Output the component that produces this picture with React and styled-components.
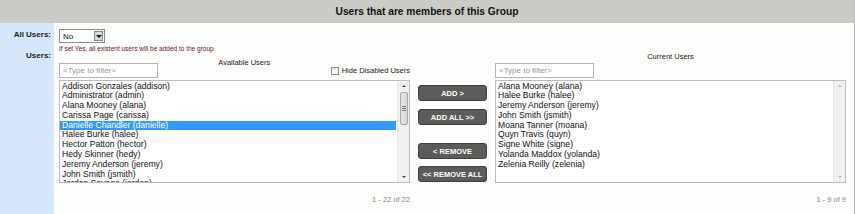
import React from 'react';
import styled, { createGlobalStyle } from 'styled-components';

const GlobalStyle = createGlobalStyle`
  body {
    margin: 0;
    background: #ffffff;
    font-family: "Liberation Sans", Arial, sans-serif;
  }
`;

const Page = styled.div`
  width: 854px;
  height: 214px;
  border-right: 1px solid #b8b8b6;
  background: #fdfdfb;
  display: flex;
  flex-direction: column;
  overflow: hidden;
`;

const Header = styled.div`
  height: 23px;
  flex: none;
  background: #cbcbc8;
  display: flex;
  align-items: center;
  justify-content: center;
  font-size: 10.2px;
  font-weight: bold;
  color: #111;
`;

const Body = styled.div`
  flex: 1;
  display: grid;
  grid-template-columns: 54px 1fr;
`;

const LabelColumn = styled.div`
  background: #d6e6fb;
  display: flex;
  flex-direction: column;
  align-items: flex-end;
  padding: 7px 3px 0 0;
`;

const Label = styled.div`
  font-size: 8px;
  font-weight: bold;
  color: #222;
  line-height: 10px;
  margin-bottom: ${(p) => p.gap || 0}px;
`;

const Content = styled.div`
  padding: 6px 0 0 5px;
  display: flex;
  flex-direction: column;
`;

const Select = styled.div`
  width: 41px;
  height: 12px;
  border: 1px solid #8d8d8d;
  background: #fff;
  display: flex;
  align-items: center;
  font-size: 8px;
  color: #111;
  padding-left: 3px;
  span {
    flex: 1;
  }
`;

const SelectArrow = styled.div`
  width: 9px;
  height: 10px;
  margin-right: 1px;
  background: #d9d9d9;
  border: 1px solid #8a8a8a;
  box-sizing: border-box;
  display: flex;
  align-items: center;
  justify-content: center;
  &::after {
    content: '';
    border-left: 3px solid transparent;
    border-right: 3px solid transparent;
    border-top: 3px solid #111;
  }
`;

const Hint = styled.div`
  font-size: 6.5px;
  color: #6a1033;
  line-height: 9px;
  margin-top: 1px;
`;

const Lists = styled.div`
  display: grid;
  grid-template-columns: 351px 85px 351px;
  margin-top: -1px;
`;

const Panel = styled.div`
  display: flex;
  flex-direction: column;
`;

const Toolbar = styled.div`
  height: ${(p) => p.height || 26}px;
  display: flex;
  align-items: flex-end;
`;

const Title = styled.div`
  font-size: 7.5px;
  color: #222;
  line-height: 10px;
  text-align: center;
`;

const ToolbarTitle = styled(Title)`
  flex: 1;
  align-self: flex-start;
  margin-top: 6px;
`;

const Filter = styled.div`
  width: 94px;
  height: 13px;
  border: 1px solid #b4b4b4;
  background: #fff;
  font-size: 8px;
  line-height: 13px;
  color: #999;
  padding-left: 3px;
  box-sizing: content-box;
`;

const CheckRow = styled.label`
  display: flex;
  align-items: center;
  gap: 3px;
  font-size: 7.5px;
  color: #222;
  margin-bottom: 3px;
`;

const Box = styled.span`
  width: 8px;
  height: 8px;
  box-sizing: border-box;
  border: 1px solid #8f8f8f;
  background: linear-gradient(#e9e9e9, #fdfdfd);
`;

const ListBox = styled.div`
  margin-top: 2px;
  height: 101px;
  border: 1px solid #b9bec4;
  background: #fff;
  display: flex;
  overflow: hidden;
`;

const Rows = styled.div`
  flex: 1;
  padding-top: 0.5px;
`;

const Row = styled.div`
  height: 9.8px;
  line-height: 9.8px;
  font-size: 8.6px;
  padding-left: 2px;
  white-space: nowrap;
  color: ${(p) => (p.selected ? '#fff' : '#111')};
  background: ${(p) => (p.selected ? '#3399ff' : 'transparent')};
  margin-right: 1px;
`;

const Scrollbar = styled.div`
  width: 11px;
  flex: none;
  background: #f1f1f1;
  border-left: 1px solid #e6e6e6;
  display: flex;
  flex-direction: column;
  align-items: center;
`;

const Arrow = styled.div`
  height: 10px;
  width: 100%;
  display: flex;
  align-items: center;
  justify-content: center;
  &::after {
    content: '';
    border-left: 2.5px solid transparent;
    border-right: 2.5px solid transparent;
    ${(p) => (p.down ? 'border-top' : 'border-bottom')}: 2.5px solid ${(p) =>
      p.disabled ? '#b8b8b8' : '#444'};
  }
`;

const Track = styled.div`
  flex: 1;
  width: 100%;
`;

const Thumb = styled.div`
  margin: 1px auto 0;
  width: 8px;
  height: 33px;
  border: 1px solid #a8a8a8;
  border-radius: 2px;
  box-sizing: border-box;
  background: linear-gradient(90deg, #e9e9e9, #d6d6d6);
  display: flex;
  align-items: center;
  justify-content: center;
  &::after {
    content: '';
    width: 4px;
    height: 5px;
    background: linear-gradient(#777 0 1px, transparent 1px 2px, #777 2px 3px, transparent 3px 4px, #777 4px 5px);
  }
`;

const Count = styled.div`
  text-align: right;
  font-size: 7.5px;
  color: #888;
  margin-top: 12px;
`;

const Buttons = styled.div`
  display: flex;
  flex-direction: column;
  align-items: center;
  padding-top: 33px;
`;

const Button = styled.button`
  width: 69px;
  height: 16px;
  margin-top: ${(p) => p.gap || 0}px;
  border: 1px solid #3f3f3f;
  border-radius: 3px;
  background: #5b5b59;
  color: #fff;
  font-family: "Liberation Sans", Arial, sans-serif;
  font-size: 7.5px;
  font-weight: bold;
  padding: 0;
  cursor: pointer;
`;

const available = [
  'Addison Gonzales (addison)',
  'Administrator (admin)',
  'Alana Mooney (alana)',
  'Carissa Page (carissa)',
  'Danielle Chandler (danielle)',
  'Halee Burke (halee)',
  'Hector Patton (hector)',
  'Hedy Skinner (hedy)',
  'Jeremy Anderson (jeremy)',
  'John Smith (jsmith)',
  'Jordan Savage (jordan)',
];

const current = [
  'Alana Mooney (alana)',
  'Halee Burke (halee)',
  'Jeremy Anderson (jeremy)',
  'John Smith (jsmith)',
  'Moana Tanner (moana)',
  'Quyn Travis (quyn)',
  'Signe White (signe)',
  'Yolanda Maddox (yolanda)',
  'Zelenia Reilly (zelenia)',
];

const UserList = ({ users, selected, scrollable }) => (
  <ListBox>
    <Rows>
      {users.map((u) => (
        <Row key={u} selected={u === selected}>
          {u}
        </Row>
      ))}
    </Rows>
    <Scrollbar>
      <Arrow disabled={!scrollable} />
      <Track>{scrollable && <Thumb />}</Track>
      <Arrow down disabled={!scrollable} />
    </Scrollbar>
  </ListBox>
);

const App = () => (
  <Page>
    <GlobalStyle />
    <Header>Users that are members of this Group</Header>
    <Body>
      <LabelColumn>
        <Label gap={11}>All Users:</Label>
        <Label>Users:</Label>
      </LabelColumn>
      <Content>
        <Select>
          <span>No</span>
          <SelectArrow />
        </Select>
        <Hint>If set Yes, all existent users will be added to the group</Hint>
        <Lists>
          <Panel>
            <Toolbar>
              <Filter>&lt;Type to filter&gt;</Filter>
              <ToolbarTitle>Available Users</ToolbarTitle>
              <CheckRow>
                <Box />
                Hide Disabled Users
              </CheckRow>
            </Toolbar>
            <UserList users={available} selected="Danielle Chandler (danielle)" scrollable />
            <Count>1 - 22 of 22</Count>
          </Panel>
          <Buttons>
            <Button>ADD &gt;</Button>
            <Button gap={8}>ADD ALL &gt;&gt;</Button>
            <Button gap={18}>&lt; REMOVE</Button>
            <Button gap={7}>&lt;&lt; REMOVE ALL</Button>
          </Buttons>
          <Panel>
            <Title>Current Users</Title>
            <Toolbar height={16}>
              <Filter>&lt;Type to filter&gt;</Filter>
            </Toolbar>
            <UserList users={current} />
            <Count>1 - 9 of 9</Count>
          </Panel>
        </Lists>
      </Content>
    </Body>
  </Page>
);

export default App;
